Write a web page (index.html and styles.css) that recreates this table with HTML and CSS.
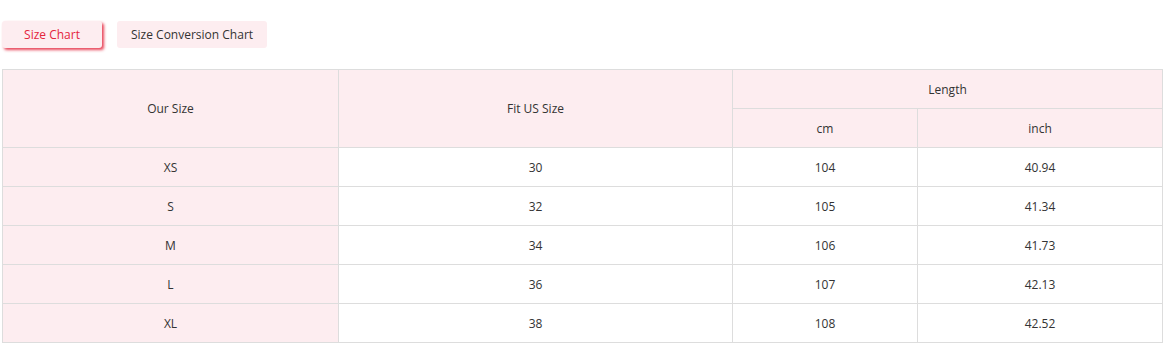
FILE: index.html
```html
<!DOCTYPE html>
<html>
<head>
<meta charset="utf-8">
<link rel="stylesheet" href="styles.css">
</head>
<body>
<div class="page">
  <div class="tabs">
    <button class="tab active">Size Chart</button>
    <button class="tab">Size Conversion Chart</button>
  </div>
  <table class="chart">
    <colgroup>
      <col class="c1"><col class="c2"><col class="c3"><col class="c4">
    </colgroup>
    <thead>
      <tr>
        <th rowspan="2">Our Size</th>
        <th rowspan="2">Fit US Size</th>
        <th colspan="2">Length</th>
      </tr>
      <tr>
        <th>cm</th>
        <th>inch</th>
      </tr>
    </thead>
    <tbody>
      <tr><td class="first">XS</td><td>30</td><td>104</td><td>40.94</td></tr>
      <tr><td class="first">S</td><td>32</td><td>105</td><td>41.34</td></tr>
      <tr><td class="first">M</td><td>34</td><td>106</td><td>41.73</td></tr>
      <tr><td class="first">L</td><td>36</td><td>107</td><td>42.13</td></tr>
      <tr><td class="first">XL</td><td>38</td><td>108</td><td>42.52</td></tr>
    </tbody>
  </table>
</div>
</body>
</html>
```
FILE: styles.css
```css
* { box-sizing: border-box; }
body {
  margin: 0;
  background: #fff;
  font-family: "Open Sans", "Noto Sans", sans-serif;
  font-size: 12px;
  color: #333;
}
.page {
  padding: 21px 0 0 2px;
}
.tabs {
  display: flex;
  gap: 15px;
  height: 27px;
  margin-bottom: 21px;
}
.tab {
  font-family: inherit;
  font-size: 12px;
  color: #333;
  background: #fdedf0;
  border: none;
  border-radius: 3px;
  padding: 0 14px;
  height: 27px;
  cursor: pointer;
}
.tab.active {
  color: #e4243c;
  width: 100px;
  box-shadow: 2px 2px 3px rgba(228, 36, 60, 0.85);
}
.chart {
  border-collapse: collapse;
  table-layout: fixed;
  width: 1160px;
}
.c1 { width: 336px; }
.c2 { width: 394px; }
.c3 { width: 185px; }
.c4 { width: 245px; }
.chart th, .chart td {
  border: 1px solid #ddd;
  height: 39px;
  text-align: center;
  font-weight: normal;
  padding: 0;
}
.chart th { background: #fdedf0; }
.chart td.first { background: #fdedf0; }
```
